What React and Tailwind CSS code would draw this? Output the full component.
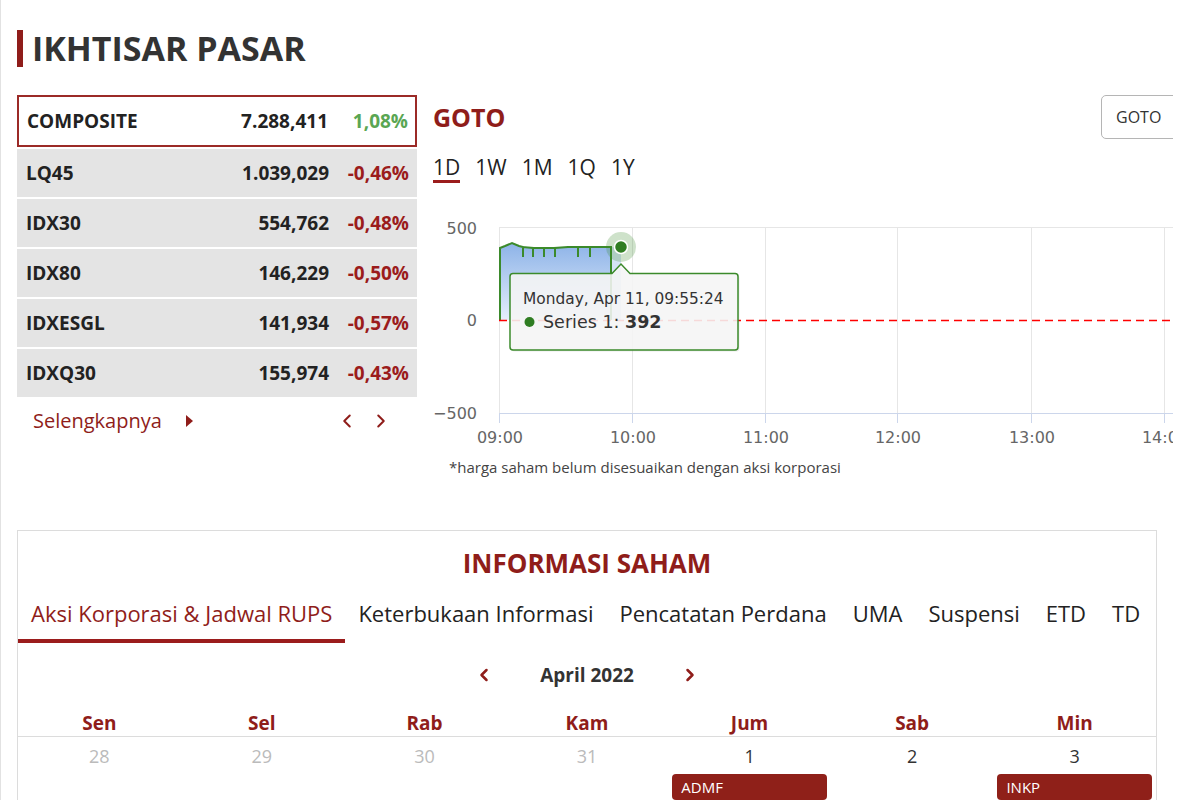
import React from 'react';
import { ChevronLeft, ChevronRight } from 'lucide-react';

const indices = [
  { name: 'LQ45', value: '1.039,029', change: '-0,46%' },
  { name: 'IDX30', value: '554,762', change: '-0,48%' },
  { name: 'IDX80', value: '146,229', change: '-0,50%' },
  { name: 'IDXESGL', value: '141,934', change: '-0,57%' },
  { name: 'IDXQ30', value: '155,974', change: '-0,43%' },
];

const tabs = ['Aksi Korporasi & Jadwal RUPS', 'Keterbukaan Informasi', 'Pencatatan Perdana', 'UMA', 'Suspensi', 'ETD', 'TD'];
const days = ['Sen', 'Sel', 'Rab', 'Kam', 'Jum', 'Sab', 'Min'];
const dates = [
  { d: '28', muted: true },
  { d: '29', muted: true },
  { d: '30', muted: true },
  { d: '31', muted: true },
  { d: '1', event: 'ADMF' },
  { d: '2' },
  { d: '3', event: 'INKP' },
];

const IntradayChart = () => {
  const grid = [66, 199, 332, 464, 598, 731];
  const labels = ['09:00', '10:00', '11:00', '12:00', '13:00', '14:00'];
  const line =
    'L67 49 L72 47 L79 44 L86 47 L90 48 L90 58 L90 48 L100 49 L100 58 L100 49 L111 49 L111 58 L111 49 L122 49 L122 58 L122 49 L135 48 L145 48 L145 58 L145 48 L157 48 L157 58 L157 48 L178 48';
  const tip =
    'M80 74.5 L179 74.5 L188 65 L197 74.5 L302 74.5 Q305 74.5 305 77.5 L305 148 Q305 151 302 151 L80 151 Q77 151 77 148 L77 77.5 Q77 74.5 80 74.5 Z';
  return (
    <svg width="740" height="255" className="block" style={{ fontFamily: '"DejaVu Sans", sans-serif' }}>
      <defs>
        <linearGradient id="area" x1="0" y1="0" x2="0" y2="1">
          <stop offset="0" stopColor="#8db3e8" />
          <stop offset="1" stopColor="#e6effb" />
        </linearGradient>
      </defs>
      <line x1="66" y1="28.5" x2="740" y2="28.5" stroke="#e6e6e6" />
      {grid.map((x) => (
        <line key={x} x1={x + 0.5} y1="28" x2={x + 0.5} y2="214" stroke="#e6e6e6" />
      ))}
      <line x1="66" y1="214.5" x2="740" y2="214.5" stroke="#ccd6eb" />
      {grid.map((x) => (
        <line key={'t' + x} x1={x + 0.5} y1="214" x2={x + 0.5} y2="224" stroke="#ccd6eb" />
      ))}
      <text x="44" y="35" textAnchor="end" fontSize="16" fill="#666">500</text>
      <text x="44" y="127" textAnchor="end" fontSize="16" fill="#666">0</text>
      <text x="44" y="220" textAnchor="end" fontSize="16" fill="#666">−500</text>
      {labels.map((l, i) => (
        <text key={l} x={grid[i] + 1} y="244" textAnchor="middle" fontSize="16" fill="#666">{l}</text>
      ))}
      <path d="M67 121 L67 49 L72 47 L79 44 L86 47 L100 49 L135 48 L178 48 L178 121 Z" fill="url(#area)" />
      <rect x="178" y="48" width="10" height="73" fill="#a9c7ef" opacity="0.5" />
      <path d={`M67 121 ${line} L178 121`} fill="none" stroke="#3b8a2b" strokeWidth="2" />
      <line x1="66" y1="121.5" x2="740" y2="121.5" stroke="#ff0000" strokeWidth="1.5" strokeDasharray="8 5" />
      <circle cx="188" cy="48" r="15" fill="#3b8a2b" opacity="0.25" />
      <circle cx="188" cy="48" r="6.5" fill="#2f7d22" stroke="#fff" strokeWidth="1.5" />
      <path d={tip} fill="#000" opacity="0.08" transform="translate(1.5 1.5)" />
      <path d={tip} fill="#f7f7f7" fillOpacity="0.88" stroke="#3b8a2b" strokeWidth="1.5" />
      <text x="90" y="105" fontSize="15.4" fill="#333">Monday, Apr 11, 09:55:24</text>
      <circle cx="96.5" cy="123" r="5" fill="#2f7d22" />
      <text x="110" y="129" fontSize="17.5" fill="#333">
        Series 1: <tspan fontWeight="bold">392</tspan>
      </text>
    </svg>
  );
};

export default function App() {
  return (
    <div className="w-[1200px] h-[800px] overflow-hidden bg-white border-l border-[#e2e2e2] font-['Open_Sans',sans-serif] text-[#333]">
      <div className="w-[1173px] overflow-hidden pl-4">
        {/* Title */}
        <div className="pt-[30px] flex items-center gap-[9px]">
          <div className="w-[6px] h-[37px] bg-[#8f1d1a]" />
          <h1 className="text-[34px] leading-[37px] font-bold text-[#333]">IKHTISAR PASAR</h1>
        </div>

        <div className="mt-[28px] flex gap-4 items-start">
          {/* Index table */}
          <div className="w-[400px] shrink-0">
            <div className="grid grid-cols-[1fr_auto_80px] items-center h-[52px] border-2 border-[#9b2a27] pl-[8px] pr-[7px] text-[19px] font-bold">
              <span className="text-[#222]">COMPOSITE</span>
              <span className="text-right text-[#222]">7.288,411</span>
              <span className="text-right text-[#5aa653]">1,08%</span>
            </div>
            {indices.map((r) => (
              <div
                key={r.name}
                className="mt-[2px] grid grid-cols-[1fr_auto_80px] items-center h-[48px] bg-[#e4e4e4] pl-[9px] pr-[8px] text-[19px] font-bold"
              >
                <span className="text-[#222]">{r.name}</span>
                <span className="text-right text-[#222]">{r.value}</span>
                <span className="text-right text-[#9b1c1c]">{r.change}</span>
              </div>
            ))}
            <div className="h-[48px] flex items-center pl-4 pr-[25px]">
              <span className="text-[20px] text-[#8f1d1a]">Selengkapnya</span>
              <span className="ml-[24px] w-0 h-0 border-y-[6px] border-y-transparent border-l-[7px] border-l-[#8f1d1a]" />
              <div className="ml-auto flex items-center gap-[12px] text-[#8f1d1a]">
                <ChevronLeft size={22} strokeWidth={2.2} />
                <ChevronRight size={22} strokeWidth={2.2} />
              </div>
            </div>
          </div>

          {/* Chart */}
          <div className="w-[740px] shrink-0 overflow-hidden">
            <div className="h-[44px] flex items-center">
              <h2 className="text-[25px] font-bold text-[#8f1d1a] leading-none">GOTO</h2>
              <div className="ml-auto -mr-[24px] w-[96px] h-[44px] shrink-0 border border-[#b5b5b5] rounded-[5px] flex items-center pl-[14px] text-[16px] text-[#333]">
                GOTO
              </div>
            </div>
            <div className="mt-[15px] flex items-start gap-[15px] text-[21px] text-[#222]">
              <span className="leading-[26px] border-b-[3px] border-[#9b1c1c]">1D</span>
              <span className="leading-[26px]">1W</span>
              <span className="leading-[26px]">1M</span>
              <span className="leading-[26px]">1Q</span>
              <span className="leading-[26px]">1Y</span>
            </div>
            <div className="mt-[16px]">
              <IntradayChart />
            </div>
            <p className="mt-[3px] pl-4 text-[15px] leading-[20px] text-[#444]">
              *harga saham belum disesuaikan dengan aksi korporasi
            </p>
          </div>
        </div>

        {/* Informasi saham */}
        <div className="mt-[53px] w-[1140px] border border-[#dcdcdc] pt-[16px] h-[300px]">
          <h2 className="text-center text-[26px] leading-[32px] font-bold text-[#8f1d1a]">INFORMASI SAHAM</h2>
          <div className="mt-[12px] flex">
            {tabs.map((t, i) => (
              <div
                key={t}
                className={`shrink-0 whitespace-nowrap px-[13px] pt-[8px] pb-[12px] text-[22px] leading-[28px] border-b-4 ${
                  i === 0 ? 'border-[#9b1c1c] text-[#8f1d1a]' : 'border-transparent text-[#222]'
                }`}
              >
                {t}
              </div>
            ))}
          </div>
          <div className="mt-[18px] flex items-center justify-center h-[28px] text-[#8f1d1a]">
            <ChevronLeft size={20} strokeWidth={3} />
            <span className="mx-[46px] text-[19px] font-bold text-[#333]">April 2022</span>
            <ChevronRight size={20} strokeWidth={3} />
          </div>
          <div className="mt-[21px] grid grid-cols-7 border-b border-[#dcdcdc]">
            {days.map((d) => (
              <div key={d} className="text-center text-[19px] leading-[26px] font-bold text-[#8f1d1a]">{d}</div>
            ))}
          </div>
          <div className="grid grid-cols-7 pt-[7px]">
            {dates.map((c) => (
              <div key={c.d} className="flex flex-col px-[4px]">
                <span className={`text-center text-[18px] leading-[24px] ${c.muted ? 'text-[#bbb]' : 'text-[#333]'}`}>{c.d}</span>
                {c.event && (
                  <div className="mt-[6px] h-[26px] rounded-[4px] bg-[#8f2019] text-white text-[15px] leading-[26px] pl-[9px]">
                    {c.event}
                  </div>
                )}
              </div>
            ))}
          </div>
        </div>
      </div>
    </div>
  );
}
